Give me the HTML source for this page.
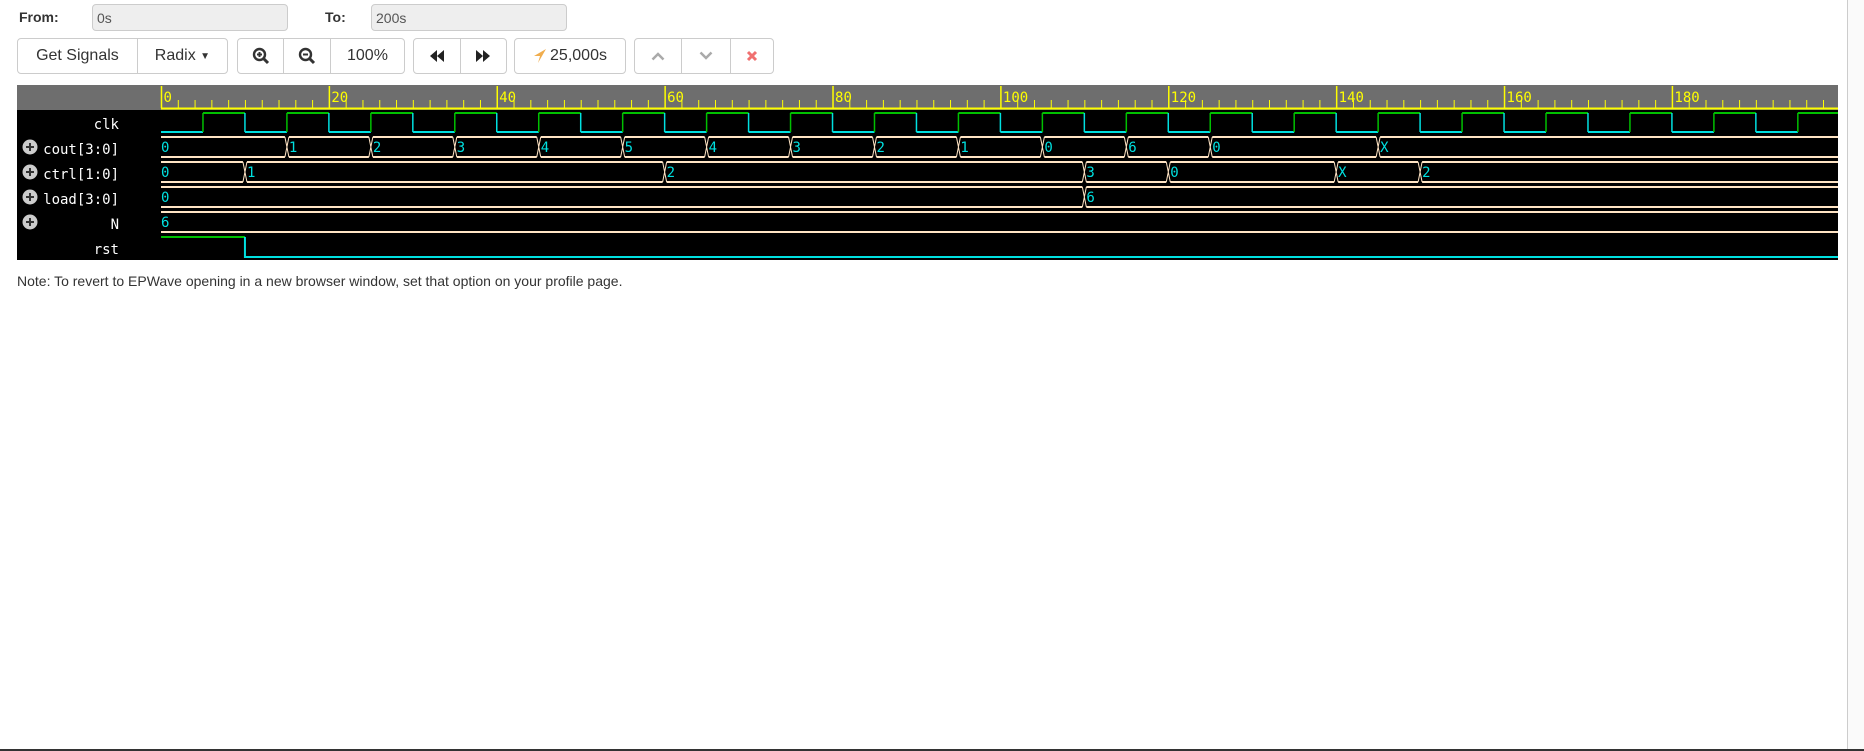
<!DOCTYPE html>
<html><head><meta charset="utf-8"><style>
body{margin:0;width:1864px;height:751px;background:#fff;font-family:"Liberation Sans",Arial,sans-serif;position:relative;overflow:hidden;color:#333}
.lbl{position:absolute;font-weight:bold;font-size:14px;color:#333}
.inp{position:absolute;height:27px;background:#eee;border:1px solid #ccc;border-radius:4px;box-sizing:border-box;font-size:14px;color:#555;padding:5px 4px}
.grp{position:absolute;top:38px;height:36px;border:1px solid #ccc;border-radius:4px;box-sizing:border-box;display:flex;background:#fff}
.grp div{height:100%;display:flex;align-items:center;justify-content:center;border-right:1px solid #ccc;box-sizing:border-box;font-size:16px;color:#333}
.grp div:last-child{border-right:none}
.note{position:absolute;left:17px;top:273px;font-size:14px;color:#333}
</style></head><body>
<div class="lbl" style="left:19px;top:9px">From:</div>
<div class="inp" style="left:92px;top:4px;width:196px">0s</div>
<div class="lbl" style="left:325px;top:9px">To:</div>
<div class="inp" style="left:371px;top:4px;width:196px">200s</div>

<div class="grp" style="left:17px;width:211px"><div style="width:121px">Get Signals</div><div style="width:90px">Radix&nbsp;<span style="font-size:10px">▼</span></div></div>
<div class="grp" style="left:237px;width:168px">
<div style="width:47px"><svg width="18" height="18" viewBox="0 0 18 18"><circle cx="7.5" cy="7.5" r="5.5" fill="none" stroke="#333" stroke-width="2.4"/><line x1="11.5" y1="11.5" x2="16" y2="16" stroke="#333" stroke-width="3"/><path d="M5 7.5h5M7.5 5v5" stroke="#333" stroke-width="2"/></svg></div>
<div style="width:47px"><svg width="18" height="18" viewBox="0 0 18 18"><circle cx="7.5" cy="7.5" r="5.5" fill="none" stroke="#333" stroke-width="2.4"/><line x1="11.5" y1="11.5" x2="16" y2="16" stroke="#333" stroke-width="3"/><path d="M5 7.5h5" stroke="#333" stroke-width="2"/></svg></div>
<div style="width:74px">100%</div></div>
<div class="grp" style="left:413px;width:94px">
<div style="width:48px"><svg width="16" height="14" viewBox="0 0 16 14"><path d="M8 1L1 7l7 6zM15 1L8 7l7 6z" fill="#222"/></svg></div>
<div style="width:46px"><svg width="16" height="14" viewBox="0 0 16 14"><path d="M1 1l7 6-7 6zM8 1l7 6-7 6z" fill="#222"/></svg></div></div>
<div class="grp" style="left:514px;width:112px"><div style="width:112px"><svg width="14" height="16" viewBox="0 0 14 16" style="margin-right:3px"><path d="M13 1L1 8h6l-2 7z" fill="#f0ad4e"/></svg>25,000s</div></div>
<div class="grp" style="left:634px;width:140px">
<div style="width:48px"><svg width="14" height="10" viewBox="0 0 14 10"><path d="M1.5 8.5L7 3l5.5 5.5" fill="none" stroke="#aaa" stroke-width="2.5"/></svg></div>
<div style="width:49px"><svg width="14" height="10" viewBox="0 0 14 10"><path d="M1.5 1.5L7 7l5.5-5.5" fill="none" stroke="#aaa" stroke-width="2.5"/></svg></div>
<div style="width:43px"><svg width="12" height="12" viewBox="0 0 12 12"><path d="M2 2l8 8M10 2l-8 8" stroke="#f07070" stroke-width="3"/></svg></div></div>

<svg id="w" style="position:absolute;left:0;top:0" width="1864" height="270"></svg>
<div class="note">Note: To revert to EPWave opening in a new browser window, set that option on your profile page.</div>
<div style="position:absolute;left:1847px;top:0;width:17px;height:751px;background:#fafafa;border-left:1px solid #ccc"></div>
<div style="position:absolute;left:0;top:749px;width:1864px;height:2px;background:#333"></div>
<script>
(function(){
var s='',X=function(t){return 161+8.394*t};
s+='<rect x="17" y="85" width="1821" height="25" fill="#6e6e6e"/>';
s+='<rect x="17" y="110" width="1821" height="150" fill="#000"/>';
s+='<line x1="161" y1="108.5" x2="1838" y2="108.5" stroke="#ffff00" stroke-width="2"/>';
for(var t=0;t<=198;t+=2){var x=X(t)+0.5;var maj=t%20==0;s+='<line x1="'+x+'" y1="'+(maj?86:100)+'" x2="'+x+'" y2="108" stroke="#ffff00" stroke-width="'+(maj?1.5:1)+'"/>';if(maj)s+='<text x="'+(x+2)+'" y="102" fill="#ffff00" font-family="DejaVu Sans Mono,monospace" font-size="14">'+t+'</text>';}
var G='#00c000',C='#00e0e0',B='#ffe4c4';
var hy=113,ly=132;
for(var t=0;t<200;t+=10){var a=X(t),b=X(t+5),c=X(t+10);
s+='<line x1="'+a+'" y1="'+ly+'" x2="'+b+'" y2="'+ly+'" stroke="'+C+'" stroke-width="2"/>';
s+='<line x1="'+b+'" y1="'+ly+'" x2="'+b+'" y2="'+hy+'" stroke="'+G+'" stroke-width="1.5"/>';
s+='<line x1="'+b+'" y1="'+hy+'" x2="'+Math.min(c,1838)+'" y2="'+hy+'" stroke="'+G+'" stroke-width="2"/>';
if(c<1838)s+='<line x1="'+c+'" y1="'+hy+'" x2="'+c+'" y2="'+ly+'" stroke="'+C+'" stroke-width="1.5"/>';}
function bus(row,tr){var tp=112+25*row,bt=tp+20;
for(var i=0;i<tr.length;i++){var x1=X(tr[i][0]),x2=i+1<tr.length?X(tr[i+1][0]):1838;
var l=i==0?x1:x1+2,r=i+1<tr.length?x2-2:x2;
s+='<path d="M'+l+' '+tp+'H'+r+'M'+l+' '+bt+'H'+r+'" stroke="'+B+'" stroke-width="2" fill="none"/>';
if(i>0)s+='<path d="M'+(x1-2)+' '+tp+'L'+(x1+2)+' '+bt+'M'+(x1+2)+' '+tp+'L'+(x1-2)+' '+bt+'" stroke="'+B+'" stroke-width="1"/>';
s+='<text x="'+(x1+(i?2:0))+'" y="'+(tp+15)+'" fill="'+C+'" font-family="DejaVu Sans Mono,monospace" font-size="14">'+tr[i][1]+'</text>';}}
bus(1,[[0,0],[15,1],[25,2],[35,3],[45,4],[55,5],[65,4],[75,3],[85,2],[95,1],[105,0],[115,6],[125,0],[145,'X']]);
bus(2,[[0,0],[10,1],[60,2],[110,3],[120,0],[140,'X'],[150,2]]);
bus(3,[[0,0],[110,6]]);
bus(4,[[0,6]]);
s+='<path d="M'+X(0)+' 237H'+X(10)+'" stroke="'+G+'" stroke-width="2"/><path d="M'+X(10)+' 237V257H1838" stroke="'+C+'" stroke-width="2" fill="none"/>';
var L=[['clk',124,0],['cout[3:0]',149,1],['ctrl[1:0]',174,1],['load[3:0]',199,1],['N',224,1],['rst',249,0]];
L.forEach(function(o){s+='<text x="119" y="'+(o[1]+5)+'" text-anchor="end" fill="#fff" font-family="DejaVu Sans Mono,monospace" font-size="14">'+o[0]+'</text>';
if(o[2])s+='<circle cx="30" cy="'+(o[1]-2)+'" r="7.5" fill="#ccc"/><path d="M26 '+(o[1]-2)+'h8M30 '+(o[1]-6)+'v8" stroke="#333" stroke-width="2"/>';});
document.getElementById('w').innerHTML=s;
})();
</script>
</body></html>
